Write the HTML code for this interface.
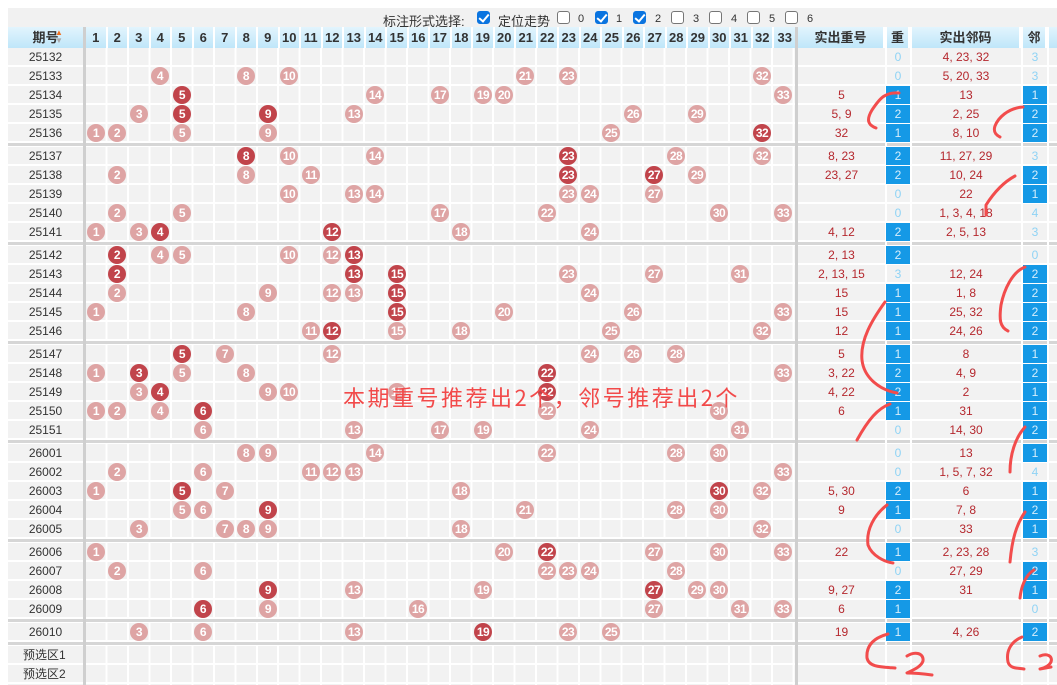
<!DOCTYPE html>
<html><head><meta charset="utf-8">
<style>
*{margin:0;padding:0;box-sizing:border-box}
body{width:1057px;height:685px;background:#fff;position:relative;overflow:hidden;font-family:"Liberation Sans","Noto Sans CJK SC",sans-serif;font-size:12px;color:#333}
.top{position:absolute;left:8px;top:8px;width:1049px;height:19px;background:#f1f1f1}
.tt{position:absolute;top:11px;font-size:13px;color:#333;white-space:nowrap}
.cb{position:absolute;top:11px;width:13px;height:13px;border:1px solid #767676;border-radius:3px;background:#fff}
.cb.on{background:#0a74e0;border-color:#0a74e0}
.cb.on:after{content:"";position:absolute;left:3px;top:0px;width:4px;height:8px;border:solid #fff;border-width:0 2px 2px 0;transform:rotate(40deg)}
.hd{position:absolute;top:27px;left:8px;width:1049px;height:21px;background:linear-gradient(#e2f4fd,#bfe6f9)}
.hc{position:absolute;top:27px;height:21px;line-height:21px;text-align:center;font-weight:bold;font-size:13px;color:#333;border-right:2px solid #fff}
.body{position:absolute;left:8px;top:48px;width:1049px;height:637px;background:#f2f2f2}
.grp{position:absolute;left:8px;width:1049px;background:repeating-linear-gradient(180deg,transparent 0 17px,#fff 17px 19px)}
.sep{position:absolute;left:8px;width:1049px;height:4px;background:#d6d6d6;border-bottom:1px solid #fff}
.vl{position:absolute;top:27px;height:658px;width:2px;background:#fff}
.vg{position:absolute;top:27px;height:658px;width:3px;background:#cfcfcf}
.ng{position:absolute;left:86px;top:48px;width:709px;height:637px;background:repeating-linear-gradient(90deg,transparent 0 19.47px,#fff 19.47px 21.47px)}
.r{position:absolute;left:0;width:1057px;height:19px}
.r span{position:absolute}
.q{left:8px;width:75px;text-align:center;line-height:18px;color:#333}
.b{top:0;width:18px;height:18px;border-radius:50%;background:#dea4a4;color:#fff;font-weight:bold;font-size:12px;line-height:18px;text-align:center;letter-spacing:-0.5px}
.d{background:#c1444b}
.c1{left:87px}.c2{left:108px}.c3{left:130px}.c4{left:151px}.c5{left:173px}.c6{left:194px}.c7{left:216px}.c8{left:237px}.c9{left:259px}.c10{left:280px}.c11{left:302px}.c12{left:323px}.c13{left:345px}.c14{left:366px}.c15{left:388px}.c16{left:409px}.c17{left:431px}.c18{left:452px}.c19{left:474px}.c20{left:495px}.c21{left:516px}.c22{left:538px}.c23{left:559px}.c24{left:581px}.c25{left:602px}.c26{left:624px}.c27{left:645px}.c28{left:667px}.c29{left:688px}.c30{left:710px}.c31{left:731px}.c32{left:753px}.c33{left:774px}
.rp{left:798px;width:87px;text-align:center;line-height:18px;color:#b5282e}
.nb{left:911px;width:110px;text-align:center;line-height:18px;color:#b5282e}
.z{left:886px;width:24px;height:18px;text-align:center;line-height:18px;color:#8fd3f5}
.l{left:1023px;width:24px;height:18px;text-align:center;line-height:18px;color:#8fd3f5}
.B{background:#1599e6;color:#d6eefc}
.note{position:absolute;left:343px;top:381px;font-size:22px;letter-spacing:2.5px;color:#f24a4a;white-space:nowrap;font-family:"Noto Sans CJK SC","WenQuanYi Zen Hei",sans-serif}
</style></head><body>
<div class="top"></div>
<span class="tt" style="left:383px">标注形式选择:</span>
<span class="cb on" style="left:477px"></span><span class="tt" style="left:498px">定位走势</span>
<span class="cb" style="left:557px"></span><span class="tt" style="left:578px;font-size:11px;top:13px">0</span>
<span class="cb on" style="left:595px"></span><span class="tt" style="left:616px;font-size:11px;top:13px">1</span>
<span class="cb on" style="left:633px"></span><span class="tt" style="left:655px;font-size:11px;top:13px">2</span>
<span class="cb" style="left:671px"></span><span class="tt" style="left:693px;font-size:11px;top:13px">3</span>
<span class="cb" style="left:709px"></span><span class="tt" style="left:731px;font-size:11px;top:13px">4</span>
<span class="cb" style="left:747px"></span><span class="tt" style="left:769px;font-size:11px;top:13px">5</span>
<span class="cb" style="left:785px"></span><span class="tt" style="left:807px;font-size:11px;top:13px">6</span>

<div class="hd"></div>
<div class="body"></div>
<div class="ng"></div>
<div class="grp" style="top:48px;height:95px"></div>
<div class="grp" style="top:147px;height:95px"></div>
<div class="grp" style="top:246px;height:95px"></div>
<div class="grp" style="top:345px;height:95px"></div>
<div class="grp" style="top:444px;height:95px"></div>
<div class="grp" style="top:543px;height:76px"></div>
<div class="grp" style="top:623px;height:19px"></div>
<div class="grp" style="top:646px;height:39px"></div>
<div class="sep" style="top:143px"></div>
<div class="sep" style="top:242px"></div>
<div class="sep" style="top:341px"></div>
<div class="sep" style="top:440px"></div>
<div class="sep" style="top:539px"></div>
<div class="sep" style="top:619px"></div>
<div class="sep" style="top:642px"></div>
<div class="vg" style="left:83px"></div>
<div class="vg" style="left:795px"></div>
<div class="vl" style="left:885px"></div>
<div class="vl" style="left:910px"></div>
<div class="vl" style="left:1021px"></div>
<div class="vl" style="left:1047px"></div>

<div class="hc" style="left:8px;width:75px;border:none">期号<span style="position:absolute;left:47px;top:2px;font-size:8px;color:#f07020;line-height:8px">▲</span><span style="position:absolute;left:47px;top:10px;font-size:8px;color:#aaa;line-height:8px">▼</span></div>
<div class="hc" style="left:86px;width:21.5px">1</div><div class="hc" style="left:107.5px;width:21.5px">2</div><div class="hc" style="left:129px;width:21.5px">3</div><div class="hc" style="left:150.5px;width:21.5px">4</div><div class="hc" style="left:172px;width:21.5px">5</div><div class="hc" style="left:193.5px;width:21.5px">6</div><div class="hc" style="left:215px;width:21.5px">7</div><div class="hc" style="left:236.5px;width:21.5px">8</div><div class="hc" style="left:258px;width:21.5px">9</div><div class="hc" style="left:279.5px;width:21.5px">10</div><div class="hc" style="left:301px;width:21.5px">11</div><div class="hc" style="left:322.5px;width:21.5px">12</div><div class="hc" style="left:344px;width:21.5px">13</div><div class="hc" style="left:365.5px;width:21.5px">14</div><div class="hc" style="left:387px;width:21.5px">15</div><div class="hc" style="left:408.5px;width:21.5px">16</div><div class="hc" style="left:430px;width:21.5px">17</div><div class="hc" style="left:451.5px;width:21.5px">18</div><div class="hc" style="left:473px;width:21.5px">19</div><div class="hc" style="left:494.5px;width:21.5px">20</div><div class="hc" style="left:516px;width:21.5px">21</div><div class="hc" style="left:537.5px;width:21.5px">22</div><div class="hc" style="left:559px;width:21.5px">23</div><div class="hc" style="left:580.5px;width:21.5px">24</div><div class="hc" style="left:602px;width:21.5px">25</div><div class="hc" style="left:623.5px;width:21.5px">26</div><div class="hc" style="left:645px;width:21.5px">27</div><div class="hc" style="left:666.5px;width:21.5px">28</div><div class="hc" style="left:688px;width:21.5px">29</div><div class="hc" style="left:709.5px;width:21.5px">30</div><div class="hc" style="left:731px;width:21.5px">31</div><div class="hc" style="left:752.5px;width:21.5px">32</div><div class="hc" style="left:774px;width:21.5px;border:none">33</div>
<div class="hc" style="left:798px;width:87px">实出重号</div>
<div class="hc" style="left:887px;width:23px">重</div>
<div class="hc" style="left:912px;width:109px">实出邻码</div>
<div class="hc" style="left:1023px;width:24px">邻</div>

<div class="r" style="top:48px"><span class="q">25132</span><span class="z">0</span><span class="nb">4, 23, 32</span><span class="l">3</span></div>
<div class="r" style="top:67px"><span class="q">25133</span><span class="b c4">4</span><span class="b c8">8</span><span class="b c10">10</span><span class="b c21">21</span><span class="b c23">23</span><span class="b c32">32</span><span class="z">0</span><span class="nb">5, 20, 33</span><span class="l">3</span></div>
<div class="r" style="top:86px"><span class="q">25134</span><span class="b d c5">5</span><span class="b c14">14</span><span class="b c17">17</span><span class="b c19">19</span><span class="b c20">20</span><span class="b c33">33</span><span class="rp">5</span><span class="z B">1</span><span class="nb">13</span><span class="l B">1</span></div>
<div class="r" style="top:105px"><span class="q">25135</span><span class="b c3">3</span><span class="b d c5">5</span><span class="b d c9">9</span><span class="b c13">13</span><span class="b c26">26</span><span class="b c29">29</span><span class="rp">5, 9</span><span class="z B">2</span><span class="nb">2, 25</span><span class="l B">2</span></div>
<div class="r" style="top:124px"><span class="q">25136</span><span class="b c1">1</span><span class="b c2">2</span><span class="b c5">5</span><span class="b c9">9</span><span class="b c25">25</span><span class="b d c32">32</span><span class="rp">32</span><span class="z B">1</span><span class="nb">8, 10</span><span class="l B">2</span></div>

<div class="r" style="top:147px"><span class="q">25137</span><span class="b d c8">8</span><span class="b c10">10</span><span class="b c14">14</span><span class="b d c23">23</span><span class="b c28">28</span><span class="b c32">32</span><span class="rp">8, 23</span><span class="z B">2</span><span class="nb">11, 27, 29</span><span class="l">3</span></div>
<div class="r" style="top:166px"><span class="q">25138</span><span class="b c2">2</span><span class="b c8">8</span><span class="b c11">11</span><span class="b d c23">23</span><span class="b d c27">27</span><span class="b c29">29</span><span class="rp">23, 27</span><span class="z B">2</span><span class="nb">10, 24</span><span class="l B">2</span></div>
<div class="r" style="top:185px"><span class="q">25139</span><span class="b c10">10</span><span class="b c13">13</span><span class="b c14">14</span><span class="b c23">23</span><span class="b c24">24</span><span class="b c27">27</span><span class="z">0</span><span class="nb">22</span><span class="l B">1</span></div>
<div class="r" style="top:204px"><span class="q">25140</span><span class="b c2">2</span><span class="b c5">5</span><span class="b c17">17</span><span class="b c22">22</span><span class="b c30">30</span><span class="b c33">33</span><span class="z">0</span><span class="nb">1, 3, 4, 18</span><span class="l">4</span></div>
<div class="r" style="top:223px"><span class="q">25141</span><span class="b c1">1</span><span class="b c3">3</span><span class="b d c4">4</span><span class="b d c12">12</span><span class="b c18">18</span><span class="b c24">24</span><span class="rp">4, 12</span><span class="z B">2</span><span class="nb">2, 5, 13</span><span class="l">3</span></div>

<div class="r" style="top:246px"><span class="q">25142</span><span class="b d c2">2</span><span class="b c4">4</span><span class="b c5">5</span><span class="b c10">10</span><span class="b c12">12</span><span class="b d c13">13</span><span class="rp">2, 13</span><span class="z B">2</span><span class="l">0</span></div>
<div class="r" style="top:265px"><span class="q">25143</span><span class="b d c2">2</span><span class="b d c13">13</span><span class="b d c15">15</span><span class="b c23">23</span><span class="b c27">27</span><span class="b c31">31</span><span class="rp">2, 13, 15</span><span class="z">3</span><span class="nb">12, 24</span><span class="l B">2</span></div>
<div class="r" style="top:284px"><span class="q">25144</span><span class="b c2">2</span><span class="b c9">9</span><span class="b c12">12</span><span class="b c13">13</span><span class="b d c15">15</span><span class="b c24">24</span><span class="rp">15</span><span class="z B">1</span><span class="nb">1, 8</span><span class="l B">2</span></div>
<div class="r" style="top:303px"><span class="q">25145</span><span class="b c1">1</span><span class="b c8">8</span><span class="b d c15">15</span><span class="b c20">20</span><span class="b c26">26</span><span class="b c33">33</span><span class="rp">15</span><span class="z B">1</span><span class="nb">25, 32</span><span class="l B">2</span></div>
<div class="r" style="top:322px"><span class="q">25146</span><span class="b c11">11</span><span class="b d c12">12</span><span class="b c15">15</span><span class="b c18">18</span><span class="b c25">25</span><span class="b c32">32</span><span class="rp">12</span><span class="z B">1</span><span class="nb">24, 26</span><span class="l B">2</span></div>

<div class="r" style="top:345px"><span class="q">25147</span><span class="b d c5">5</span><span class="b c7">7</span><span class="b c12">12</span><span class="b c24">24</span><span class="b c26">26</span><span class="b c28">28</span><span class="rp">5</span><span class="z B">1</span><span class="nb">8</span><span class="l B">1</span></div>
<div class="r" style="top:364px"><span class="q">25148</span><span class="b c1">1</span><span class="b d c3">3</span><span class="b c5">5</span><span class="b c8">8</span><span class="b d c22">22</span><span class="b c33">33</span><span class="rp">3, 22</span><span class="z B">2</span><span class="nb">4, 9</span><span class="l B">2</span></div>
<div class="r" style="top:383px"><span class="q">25149</span><span class="b c3">3</span><span class="b d c4">4</span><span class="b c9">9</span><span class="b c10">10</span><span class="b c15">15</span><span class="b d c22">22</span><span class="rp">4, 22</span><span class="z B">2</span><span class="nb">2</span><span class="l B">1</span></div>
<div class="r" style="top:402px"><span class="q">25150</span><span class="b c1">1</span><span class="b c2">2</span><span class="b c4">4</span><span class="b d c6">6</span><span class="b c22">22</span><span class="b c30">30</span><span class="rp">6</span><span class="z B">1</span><span class="nb">31</span><span class="l B">1</span></div>
<div class="r" style="top:421px"><span class="q">25151</span><span class="b c6">6</span><span class="b c13">13</span><span class="b c17">17</span><span class="b c19">19</span><span class="b c24">24</span><span class="b c31">31</span><span class="z">0</span><span class="nb">14, 30</span><span class="l B">2</span></div>

<div class="r" style="top:444px"><span class="q">26001</span><span class="b c8">8</span><span class="b c9">9</span><span class="b c14">14</span><span class="b c22">22</span><span class="b c28">28</span><span class="b c30">30</span><span class="z">0</span><span class="nb">13</span><span class="l B">1</span></div>
<div class="r" style="top:463px"><span class="q">26002</span><span class="b c2">2</span><span class="b c6">6</span><span class="b c11">11</span><span class="b c12">12</span><span class="b c13">13</span><span class="b c33">33</span><span class="z">0</span><span class="nb">1, 5, 7, 32</span><span class="l">4</span></div>
<div class="r" style="top:482px"><span class="q">26003</span><span class="b c1">1</span><span class="b d c5">5</span><span class="b c7">7</span><span class="b c18">18</span><span class="b d c30">30</span><span class="b c32">32</span><span class="rp">5, 30</span><span class="z B">2</span><span class="nb">6</span><span class="l B">1</span></div>
<div class="r" style="top:501px"><span class="q">26004</span><span class="b c5">5</span><span class="b c6">6</span><span class="b d c9">9</span><span class="b c21">21</span><span class="b c28">28</span><span class="b c30">30</span><span class="rp">9</span><span class="z B">1</span><span class="nb">7, 8</span><span class="l B">2</span></div>
<div class="r" style="top:520px"><span class="q">26005</span><span class="b c3">3</span><span class="b c7">7</span><span class="b c8">8</span><span class="b c9">9</span><span class="b c18">18</span><span class="b c32">32</span><span class="z">0</span><span class="nb">33</span><span class="l B">1</span></div>

<div class="r" style="top:543px"><span class="q">26006</span><span class="b c1">1</span><span class="b c20">20</span><span class="b d c22">22</span><span class="b c27">27</span><span class="b c30">30</span><span class="b c33">33</span><span class="rp">22</span><span class="z B">1</span><span class="nb">2, 23, 28</span><span class="l">3</span></div>
<div class="r" style="top:562px"><span class="q">26007</span><span class="b c2">2</span><span class="b c6">6</span><span class="b c22">22</span><span class="b c23">23</span><span class="b c24">24</span><span class="b c28">28</span><span class="z">0</span><span class="nb">27, 29</span><span class="l B">2</span></div>
<div class="r" style="top:581px"><span class="q">26008</span><span class="b d c9">9</span><span class="b c13">13</span><span class="b c19">19</span><span class="b d c27">27</span><span class="b c29">29</span><span class="b c30">30</span><span class="rp">9, 27</span><span class="z B">2</span><span class="nb">31</span><span class="l B">1</span></div>
<div class="r" style="top:600px"><span class="q">26009</span><span class="b d c6">6</span><span class="b c9">9</span><span class="b c16">16</span><span class="b c27">27</span><span class="b c31">31</span><span class="b c33">33</span><span class="rp">6</span><span class="z B">1</span><span class="l">0</span></div>

<div class="r" style="top:623px"><span class="q">26010</span><span class="b c3">3</span><span class="b c6">6</span><span class="b c13">13</span><span class="b d c19">19</span><span class="b c23">23</span><span class="b c25">25</span><span class="rp">19</span><span class="z B">1</span><span class="nb">4, 26</span><span class="l B">2</span></div>

<div class="r" style="top:646px"><span class="q" style="text-align:left;left:23px">预选区1</span></div>
<div class="r" style="top:665px"><span class="q" style="text-align:left;left:23px">预选区2</span></div>

<div class="note">本期重号推荐出2个，邻号推荐出2个</div>

<svg style="position:absolute;left:0;top:0" width="1057" height="685" fill="none" stroke="#f24c4c" stroke-width="3" stroke-linecap="round" stroke-linejoin="round">
<path d="M899 93 C885 92 880 98 872 110 C866 120 868 125 876 128"/>
<path d="M1023 107 C1008 108 998 118 995 126 C993 132 996 135 1000 137"/>
<path d="M1015 176 C1002 183 993 194 986 205 L986 215"/>
<path d="M1025 267 C1012 272 1004 290 1001 305 C999 320 1000 327 1008 331"/>
<path d="M885 302 C872 320 860 340 862 360 C864 378 880 390 897 393"/>
<path d="M890 404 C878 408 868 420 857 440"/>
<path d="M1025 427 C1015 438 1010 455 1010 472"/>
<path d="M887 505 C874 515 866 530 868 545 C872 556 885 562 893 563"/>
<path d="M1025 512 C1016 525 1012 540 1010 562"/>
<path d="M1034 570 C1025 575 1021 588 1020 598"/>
<path d="M888 634 C873 638 866 646 867 658 C869 667 880 667 895 668"/>
<path d="M907 656 C915 651 924 653 923 661 C921 667 913 670 907 673 C915 673 925 674 932 675"/>
<path d="M1022 637 C1010 642 1006 652 1008 662 C1010 669 1018 668 1024 669"/>
<path d="M1040 656 C1047 653 1053 656 1051 662 C1049 666 1044 668 1040 669 L1051 667"/>
</svg>
</body></html>
